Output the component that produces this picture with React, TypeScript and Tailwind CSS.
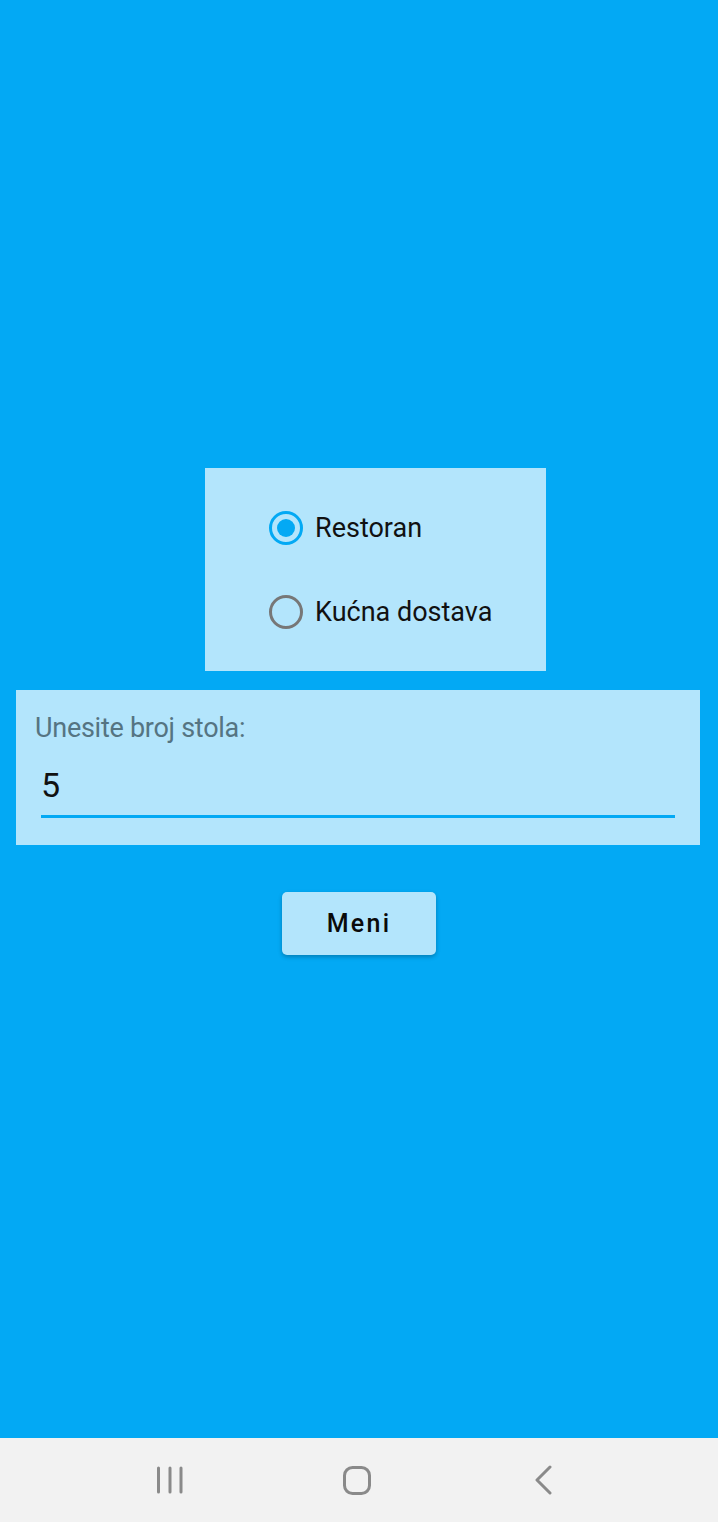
import { useState } from 'react';

export default function App() {
  const [mode, setMode] = useState<'restoran' | 'dostava'>('restoran');

  const options = [
    { id: 'restoran' as const, label: 'Restoran' },
    { id: 'dostava' as const, label: 'Kućna dostava' },
  ];

  return (
    <div className="w-[718px] h-[1522px] flex flex-col bg-[#03A9F4] font-['Roboto','Liberation_Sans',sans-serif] overflow-hidden">
      <div className="flex-1 flex flex-col items-center pt-[468px]">
        <div className="self-start ml-[205px] w-[341px] bg-[#B3E5FC] pt-[18px] pb-[17px] pl-[64px]">
          {options.map((opt) => {
            const checked = mode === opt.id;
            return (
              <button
                key={opt.id}
                onClick={() => setMode(opt.id)}
                className="h-[84px] flex items-center gap-[12px]"
              >
                <span
                  className={`w-[34px] h-[34px] rounded-full border-[3.5px] flex items-center justify-center ${
                    checked ? 'border-[#03A9F4]' : 'border-[#777777]'
                  }`}
                >
                  {checked && <span className="w-[18px] h-[18px] rounded-full bg-[#03A9F4]"></span>}
                </span>
                <span className="text-[27px] text-[#111111] leading-none">{opt.label}</span>
              </button>
            );
          })}
        </div>

        <div className="self-start ml-[16px] mt-[19px] w-[684px] h-[155px] bg-[#B3E5FC] pl-[19px] pr-[25px] pt-[25px]">
          <div className="text-[27px] leading-none text-[#557482] tracking-[-0.01em]">Unesite broj stola:</div>
          <div className="mt-[26px] ml-[6px] border-b-[3px] border-[#03A9F4] pb-[11px]">
            <span className="text-[34px] leading-none text-[#111111]">5</span>
          </div>
        </div>

        <button className="mt-[47px] w-[154px] h-[63px] rounded-[5px] bg-[#B3E5FC] shadow-[0_2px_4px_rgba(0,0,0,0.25)] text-[25px] font-medium tracking-[0.09em] text-[#0a0a0a]">
          Meni
        </button>
      </div>

      <div className="h-[84px] bg-[#F2F2F2] flex items-center pl-[154px]">
        <svg width="32" height="30" viewBox="0 0 32 30">
          <g stroke="#8a8a8a" strokeWidth="3" strokeLinecap="round">
            <line x1="4.5" y1="3" x2="4.5" y2="27" />
            <line x1="16" y1="3" x2="16" y2="27" />
            <line x1="27" y1="3" x2="27" y2="27" />
          </g>
        </svg>
        <svg width="32" height="32" viewBox="0 0 32 32" className="ml-[155px]">
          <rect x="3.5" y="3.5" width="25" height="26" rx="8" fill="none" stroke="#8a8a8a" strokeWidth="3" />
        </svg>
        <svg width="22" height="30" viewBox="0 0 22 30" className="ml-[160px]">
          <polyline points="17,2 4,15 17,28" fill="none" stroke="#8a8a8a" strokeWidth="3" strokeLinecap="round" strokeLinejoin="round" />
        </svg>
      </div>
    </div>
  );
}
